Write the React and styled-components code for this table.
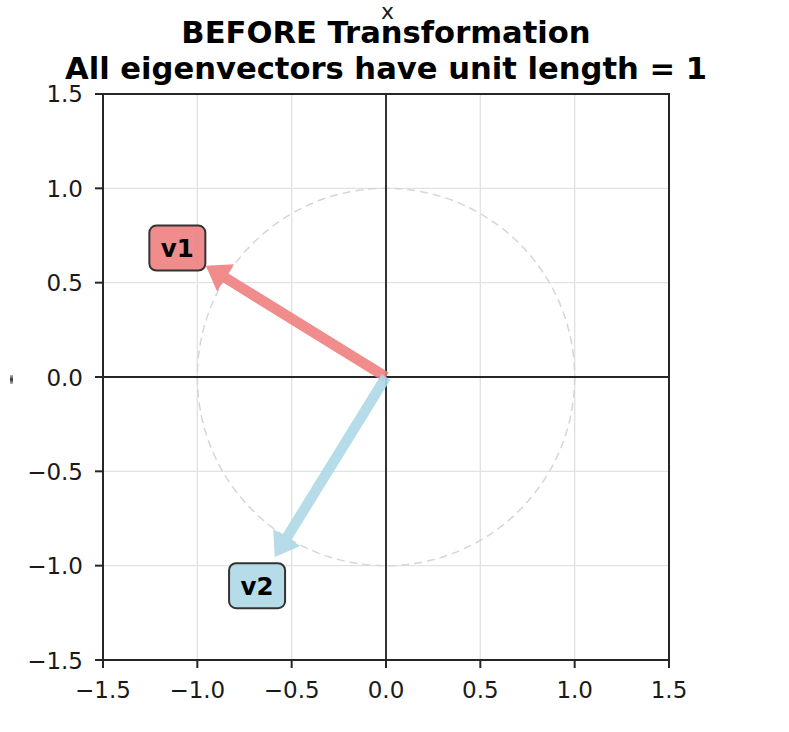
import React from "react";
import styled, { createGlobalStyle } from "styled-components";

const GlobalStyle = createGlobalStyle`
  html, body {
    margin: 0;
    padding: 0;
    background: #ffffff;
  }
  body {
    font-family: "DejaVu Sans", "Liberation Sans", sans-serif;
  }
`;

// plot geometry (page pixels)
const S = 188.67;
const CX = 386;
const CY = 377;
const X0 = 103;
const Y0 = 94;
const SIZE = 566;
const px = (x) => CX + x * S;
const py = (y) => CY - y * S;

const TICKS = [-1.5, -1, -0.5, 0, 0.5, 1, 1.5];
const GRID = [-1, -0.5, 0.5, 1];
const fmt = (t) => (t < 0 ? "\u2212" : "") + Math.abs(t).toFixed(1);

const VECTORS = [
  { name: "v1", x: -0.8507, y: 0.5257, color: "#f08080" },
  { name: "v2", x: -0.5257, y: -0.8507, color: "#add8e6" },
];

function arrowPath(v, { w = 10.5, hw = 32, hl = 23 } = {}) {
  const dx = v.x;
  const dy = -v.y;
  const nx = -dy;
  const ny = dx;
  const L = S;
  const bx = CX + dx * L;
  const by = CY + dy * L;
  const pts = [
    [CX + (nx * w) / 2, CY + (ny * w) / 2],
    [bx + (nx * w) / 2, by + (ny * w) / 2],
    [bx + (nx * hw) / 2, by + (ny * hw) / 2],
    [bx + dx * hl, by + dy * hl],
    [bx - (nx * hw) / 2, by - (ny * hw) / 2],
    [bx - (nx * w) / 2, by - (ny * w) / 2],
    [CX - (nx * w) / 2, CY - (ny * w) / 2],
  ];
  return "M" + pts.map((p) => p[0].toFixed(1) + " " + p[1].toFixed(1)).join(" L") + " Z";
}

function App() {
  return (
    <Figure>
      <GlobalStyle />
      <AxisLabelX>x</AxisLabelX>
      <YLabelStub />
      <Title>
        <TitleLine>BEFORE Transformation</TitleLine>
        <TitleLine>All eigenvectors have unit length = 1</TitleLine>
      </Title>
      <Plot width="789" height="656" viewBox="0 76 789 656">
        {GRID.map((t) => (
          <g key={"g" + t}>
            <GridLine x1={px(t)} y1={Y0} x2={px(t)} y2={Y0 + SIZE} />
            <GridLine x1={X0} y1={py(t)} x2={X0 + SIZE} y2={py(t)} />
          </g>
        ))}
        <UnitCircle cx={CX} cy={CY} r={S} />
        <ZeroLine x1={X0} y1={CY} x2={X0 + SIZE} y2={CY} />
        <ZeroLine x1={CX} y1={Y0} x2={CX} y2={Y0 + SIZE} />

        {VECTORS.map((v) => (
          <ArrowShape key={v.name} d={arrowPath(v)} $color={v.color} />
        ))}

        <Spine x={X0} y={Y0} width={SIZE} height={SIZE} />

        {TICKS.map((t) => (
          <g key={"t" + t}>
            <Tick x1={X0 - 8} y1={py(t)} x2={X0} y2={py(t)} />
            <Tick x1={px(t)} y1={Y0 + SIZE} x2={px(t)} y2={Y0 + SIZE + 8} />
            <TickLabel x={83} y={py(t) + 8.5} textAnchor="end">
              {fmt(t)}
            </TickLabel>
            <TickLabel x={px(t)} y={698} textAnchor="middle">
              {fmt(t)}
            </TickLabel>
          </g>
        ))}

        {VECTORS.map((v) => {
          const lx = px(v.x * 1.3);
          const ly = py(v.y * 1.3);
          return (
            <g key={"l" + v.name}>
              <LabelBox x={lx - 28} y={ly - 22.5} width={56} height={45} rx={7} $color={v.color} />
              <LabelText x={lx} y={ly + 9} textAnchor="middle">
                {v.name}
              </LabelText>
            </g>
          );
        })}
      </Plot>
    </Figure>
  );
}

export default App;

const Figure = styled.div`
  position: relative;
  width: 789px;
  height: 732px;
  display: flex;
  flex-direction: column;
  background: #ffffff;
  overflow: hidden;
`;

const AxisLabelX = styled.span`
  position: absolute;
  top: 1px;
  left: 381px;
  font-size: 22px;
  line-height: 22px;
  color: #1a1a1a;
`;

const YLabelStub = styled.span`
  position: absolute;
  left: 10px;
  top: 375px;
  width: 3px;
  height: 9px;
  background: linear-gradient(#bbbbbb, #333333 50%, #bbbbbb);
`;

const Title = styled.div`
  width: 772px;
  height: 76px;
  padding-top: 15px;
  box-sizing: border-box;
  display: flex;
  flex-direction: column;
  align-items: center;
`;

const TitleLine = styled.div`
  font-size: 30.6px;
  font-weight: bold;
  line-height: 36px;
  color: #000000;
  white-space: nowrap;
`;

const Plot = styled.svg`
  display: block;
  font-family: "DejaVu Sans", "Liberation Sans", sans-serif;
`;

const GridLine = styled.line`
  stroke: #e2e2e2;
  stroke-width: 1.4;
`;

const UnitCircle = styled.circle`
  fill: none;
  stroke: #d6d6d6;
  stroke-width: 1.5;
  stroke-dasharray: 8 5;
`;

const ZeroLine = styled.line`
  stroke: #262626;
  stroke-width: 1.9;
`;

const ArrowShape = styled.path`
  fill: ${(p) => p.$color};
  opacity: 0.9;
`;

const Spine = styled.rect`
  fill: none;
  stroke: #262626;
  stroke-width: 2;
`;

const Tick = styled.line`
  stroke: #262626;
  stroke-width: 2;
`;

const TickLabel = styled.text`
  font-size: 23px;
  fill: #1a1a1a;
`;

const LabelBox = styled.rect`
  fill: ${(p) => p.$color};
  fill-opacity: 0.9;
  stroke: #333333;
  stroke-width: 2;
`;

const LabelText = styled.text`
  font-size: 24.5px;
  font-weight: bold;
  fill: #000000;
`;
